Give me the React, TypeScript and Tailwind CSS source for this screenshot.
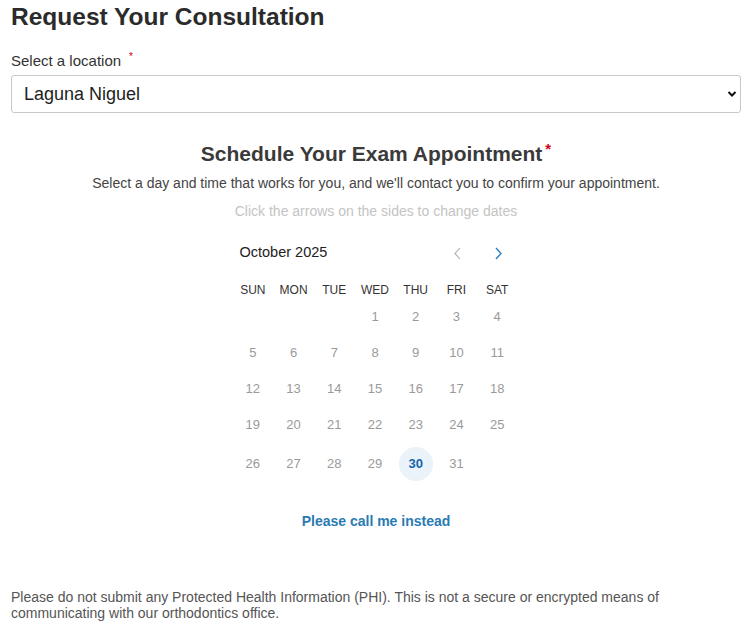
import React, { useState } from 'react';

const weekdays = ['SUN', 'MON', 'TUE', 'WED', 'THU', 'FRI', 'SAT'];

// October 2025 starts on a Wednesday
const cells: (number | null)[] = [null, null, null, ...Array.from({ length: 31 }, (_, i) => i + 1)];
const weeks: (number | null)[][] = [];
for (let i = 0; i < cells.length; i += 7) {
  const w = cells.slice(i, i + 7);
  while (w.length < 7) w.push(null);
  weeks.push(w);
}

export default function App() {
  const [location, setLocation] = useState('Laguna Niguel');
  const [selected, setSelected] = useState(30);

  return (
    <div className="bg-white pl-[11px] pr-[12px] text-[#333] [font-family:'Liberation_Sans',Arial,sans-serif]">
      <h1 className="pt-[3px] text-[24.5px] font-bold leading-[28px] text-[#2b2b2b]">Request Your Consultation</h1>

      <label className="mt-5 block text-[15px] leading-5 text-[#333]">
        Select a location
        <span className="relative -top-[6px] ml-[8px] text-[10px] leading-none text-[#d0021b]">*</span>
      </label>
      <div className="relative mt-1">
        <select
          value={location}
          onChange={(e) => setLocation(e.target.value)}
          className="h-[38px] w-full appearance-none rounded-[3px] border border-[#c8c8c8] bg-white pl-3 text-[18px] text-[#1e1e1e] outline-none"
        >
          <option>Laguna Niguel</option>
          <option>Mission Viejo</option>
          <option>Irvine</option>
        </select>
        <svg className="pointer-events-none absolute right-[4px] top-[15px]" width="10" height="8" viewBox="0 0 10 8">
          <path d="M1.5 2 L5 5.5 L8.5 2" fill="none" stroke="#111" strokeWidth="2" />
        </svg>
      </div>

      <div className="mt-[28px] flex flex-col items-center">
        <h2 className="h-[26px] text-[21px] font-bold leading-[26px] text-[#3a3a3a]">
          Schedule Your Exam Appointment
          <span className="ml-[3px] align-top text-[15px] leading-none text-[#d0021b]">*</span>
        </h2>
        <p className="mt-[6px] text-[14px] leading-5 text-[#444]">
          Select a day and time that works for you, and we'll contact you to confirm your appointment.
        </p>
        <p className="mt-2 text-[14px] leading-5 text-[#c4c4c4]">Click the arrows on the sides to change dates</p>

        <div className="mt-[22px] w-[285px] -translate-x-px">
          <div className="flex h-5 items-center justify-between pl-[7px] pr-[15px]">
            <span className="text-[14.5px] text-[#222]">October 2025</span>
            <div className="flex items-center gap-[33px]">
              <button className="flex h-5 w-[8px] items-center justify-center">
                <svg width="7" height="13" viewBox="0 0 7 13">
                  <path d="M6 1 L1 6.5 L6 12" fill="none" stroke="#aaa" strokeWidth="1.1" />
                </svg>
              </button>
              <button className="flex h-5 w-[8px] items-center justify-center">
                <svg width="7" height="13" viewBox="0 0 7 13">
                  <path d="M1 1 L6 6.5 L1 12" fill="none" stroke="#2b7fc4" strokeWidth="1.4" />
                </svg>
              </button>
            </div>
          </div>

          <div className="mt-[19px] grid h-4 grid-cols-7 items-center">
            {weekdays.map((d) => (
              <div key={d} className="text-center text-[12px] leading-4 text-[#333]">{d}</div>
            ))}
          </div>

          <div className="mt-px">
            {weeks.map((w, wi) => (
              <div key={wi} className={`grid grid-cols-7 ${wi === weeks.length - 1 ? 'h-[41px]' : 'h-9'}`}>
                {w.map((d, di) => (
                  <div key={di} className="flex items-center justify-center">
                    {d !== null &&
                      (d === selected ? (
                        <button
                          onClick={() => setSelected(d)}
                          className="flex h-[34px] w-[34px] items-center justify-center rounded-full bg-[#eaf2fa] text-[13px] font-bold text-[#1766ad]"
                        >
                          {d}
                        </button>
                      ) : (
                        <button onClick={() => setSelected(d)} className="text-[13px] text-[#9a9a9a]">
                          {d}
                        </button>
                      ))}
                  </div>
                ))}
              </div>
            ))}
          </div>
        </div>

        <button className="mt-[27px] text-[14px] font-bold leading-5 text-[#2a7bb3]">Please call me instead</button>
      </div>

      <p className="mt-[58px] pb-2 text-[14px] leading-4 text-[#555]">
        Please do not submit any Protected Health Information (PHI). This is not a secure or encrypted means of
        communicating with our orthodontics office.
      </p>
    </div>
  );
}
